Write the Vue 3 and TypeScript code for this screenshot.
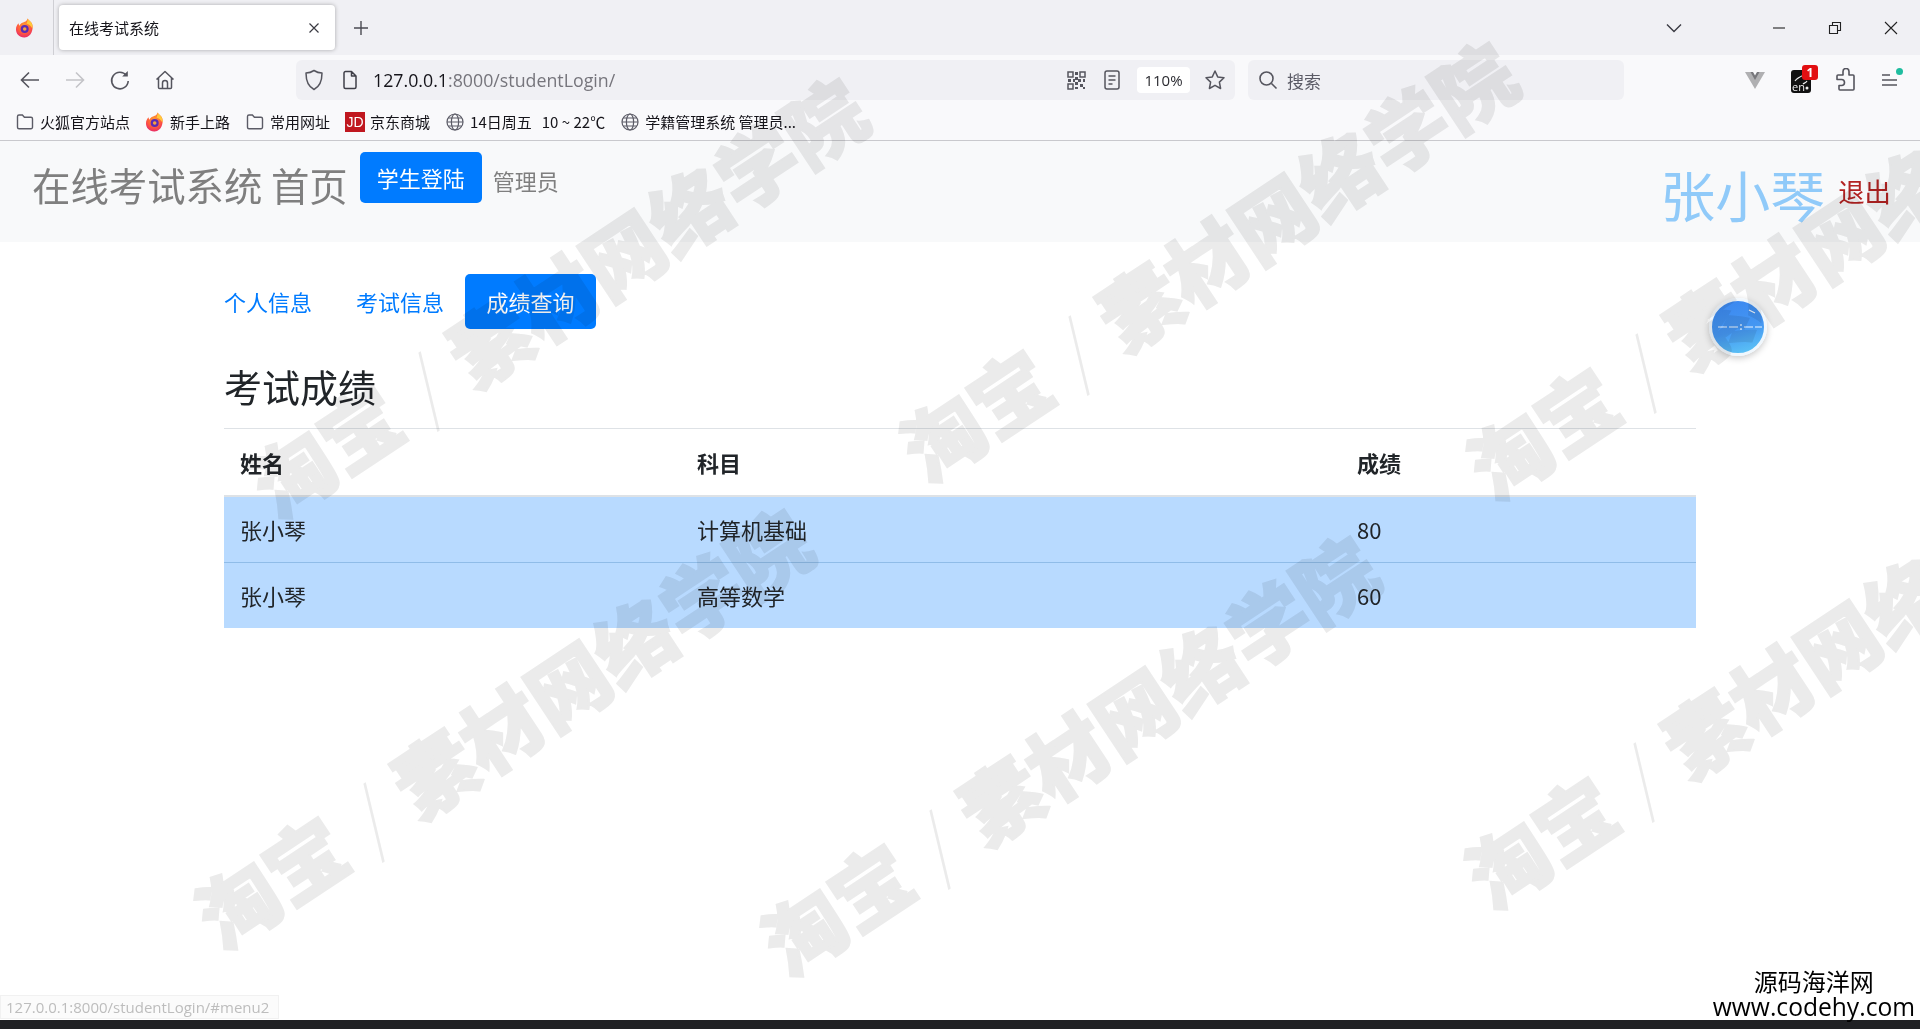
<script setup lang="ts">
const bookmarks = [
  { icon: 'folder', label: '火狐官方站点' },
  { icon: 'fox', label: '新手上路' },
  { icon: 'folder', label: '常用网址' },
  { icon: 'jd', label: '京东商城' },
  { icon: 'globe', label: '14日周五   10 ~ 22℃' },
  { icon: 'globe', label: '学籍管理系统 管理员...' },
]

const scores = [
  { name: '张小琴', subject: '计算机基础', score: 80 },
  { name: '张小琴', subject: '高等数学', score: 60 },
]

const marks = ['a', 'b', 'c', 'd', 'e', 'f']
</script>

<template>
  <div class="screen">
    <svg class="defs" width="0" height="0">
      <defs>
        <radialGradient id="foxFill" cx="50%" cy="35%" r="70%">
          <stop offset="0" stop-color="#ff9a2e" />
          <stop offset="0.6" stop-color="#ff5a3c" />
          <stop offset="1" stop-color="#e4226f" />
        </radialGradient>
        <symbol id="fox" viewBox="0 0 20 20">
          <path d="M12.5 0.5c1 1.6 3.6 3 4.6 5.600 1.600 4.400-.4 13-7.400 13.400C4.600 19.800 1 16.200 1 11.600 1 8.800 2 6.800 3.600 5.300c0 1.200.4 2 1 2.500C5.400 5 9 4.400 10.500 3.600c1-.6 1.800-1.700 2-3.100z" fill="url(#foxFill)" />
          <path d="M12.500.5c1 1.600 3.600 3 4.600 5.600.5 1.400.6 3.200.3 5-.9-2.400-2.900-4.700-6-5.600.9-1.500 1.300-3.200 1.100-5z" fill="#ffc93a" />
          <circle cx="9.700" cy="11" r="4" fill="#5b2bb5" />
          <circle cx="9.700" cy="11" r="1.800" fill="#f7a13d" />
        </symbol>
        <symbol id="folder" viewBox="0 0 20 20">
          <path d="M2.500 4.500a1.500 1.500 0 0 1 1.500-1.500h3.400l2 2.200H16a1.500 1.500 0 0 1 1.500 1.500v8.600a1.500 1.500 0 0 1-1.500 1.500H4a1.500 1.500 0 0 1-1.500-1.500z" fill="none" stroke="#5b5b66" stroke-width="1.400" />
        </symbol>
        <symbol id="globe" viewBox="0 0 20 20">
          <g fill="none" stroke="#5b5b66" stroke-width="1.200">
            <circle cx="10" cy="10" r="8" />
            <ellipse cx="10" cy="10" rx="3.600" ry="8" />
            <path d="M2 10h16M3.200 6h13.600M3.200 14h13.600" />
          </g>
        </symbol>
      </defs>
    </svg>

    <header class="tabstrip">
      <svg class="tab-fox" width="20" height="20"><use href="#fox" /></svg>
      <span class="tab-divider"></span>
      <div class="tab">
        <span class="tab-title">在线考试系统</span>
        <svg class="tab-close" width="12" height="12" viewBox="0 0 12 12"><path d="M1.500 1.500l9 9M10.500 1.500l-9 9" stroke="#3a3a42" stroke-width="1.200" /></svg>
      </div>
      <svg class="tab-new" width="16" height="16" viewBox="0 0 16 16"><path d="M8 1v14M1 8h14" stroke="#4a4a52" stroke-width="1.400" /></svg>
      <svg class="tab-list" width="16" height="10" viewBox="0 0 16 10"><path d="M1 1.500l7 7 7-7" fill="none" stroke="#3a3a42" stroke-width="1.400" /></svg>
      <div class="win-btns">
        <svg width="14" height="14" viewBox="0 0 14 14"><path d="M1 7h12" stroke="#222" stroke-width="1.100" /></svg>
        <svg width="14" height="14" viewBox="0 0 14 14"><path d="M1.500 4.500h8v8h-8zM4.500 4.500V1.500h8v8h-3" fill="none" stroke="#222" stroke-width="1.100" /></svg>
        <svg width="14" height="14" viewBox="0 0 14 14"><path d="M1 1l12 12M13 1L1 13" stroke="#222" stroke-width="1.100" /></svg>
      </div>
    </header>

    <div class="toolbar">
      <div class="nav-icons">
        <svg width="22" height="22" viewBox="0 0 22 22"><path d="M20 11H3M10 3.500L2.500 11l7.500 7.500" fill="none" stroke="#55555e" stroke-width="1.600" /></svg>
        <svg width="22" height="22" viewBox="0 0 22 22"><path d="M2 11h17M12 3.500l7.500 7.500-7.500 7.500" fill="none" stroke="#c4c4c8" stroke-width="1.600" /></svg>
        <svg width="22" height="22" viewBox="0 0 22 22"><path d="M17.500 6.500A8.300 8.300 0 1 0 19.200 12" fill="none" stroke="#55555e" stroke-width="1.600" /><path d="M18.800 2v5.600h-5.600" fill="#55555e" /></svg>
        <svg width="22" height="22" viewBox="0 0 22 22"><path d="M2.500 10.500L11 2.500l8.500 8M4.500 9v9.500a1 1 0 0 0 1 1h11a1 1 0 0 0 1-1V9M8.500 19.500V14a2.500 2.500 0 0 1 5 0v5.500" fill="none" stroke="#55555e" stroke-width="1.500" stroke-linejoin="round" /></svg>
      </div>
      <div class="urlbar">
        <svg class="url-shield" width="20" height="22" viewBox="0 0 20 22"><path d="M10 1.500c2.500 1.600 5 2.400 8 2.600 0 8-1.800 13.400-8 16.400C3.800 17.500 2 12.100 2 4.100c3-.2 5.500-1 8-2.600z" fill="none" stroke="#55555e" stroke-width="1.500" stroke-linejoin="round" /></svg>
        <svg class="url-page" width="18" height="20" viewBox="0 0 18 20"><path d="M3 3a1.500 1.500 0 0 1 1.500-1.500h6l4.500 4.500v11a1.500 1.500 0 0 1-1.500 1.500h-9A1.500 1.500 0 0 1 3 17zM10.500 1.500V6H15" fill="none" stroke="#3f3f48" stroke-width="1.500" stroke-linejoin="round" /></svg>
        <span class="url-text"><span class="url-host">127.0.0.1</span>:8000/studentLogin/</span>
        <svg class="url-qr" width="19" height="19" viewBox="0 0 19 19">
          <g fill="none" stroke="#55555e" stroke-width="1.500"><path d="M1 1h5v5H1zM13 1h5v5h-5zM1 13h5v5H1z" /></g>
          <path d="M8 1h3v3H8zM8 6h3v3H8zM1 8h3v3H1zM6 8h2v3H6zM11 8h3v3h-3zM16 8h2v3h-2zM8 11h3v3H8zM13 13h3v3h-3zM8 16h3v2H8zM16 16h2v2h-2z" fill="#55555e" />
        </svg>
        <svg class="url-reader" width="16" height="20" viewBox="0 0 16 20"><path d="M3 1h10a2 2 0 0 1 2 2v14a2 2 0 0 1-2 2H3a2 2 0 0 1-2-2V3a2 2 0 0 1 2-2zM4.500 6h7M4.500 10h7M4.500 14h4" fill="none" stroke="#55555e" stroke-width="1.500" /></svg>
        <span class="zoom-pill">110%</span>
        <svg class="url-star" width="22" height="22" viewBox="0 0 22 22"><path d="M11 2l2.700 5.900 6.300.8-4.600 4.400 1.200 6.400-5.600-3.200-5.600 3.200 1.200-6.400L2 8.700l6.300-.8z" fill="none" stroke="#55555e" stroke-width="1.500" stroke-linejoin="round" /></svg>
      </div>
      <div class="searchbar">
        <svg width="20" height="20" viewBox="0 0 20 20"><circle cx="8.500" cy="8.500" r="6.500" fill="none" stroke="#55555e" stroke-width="1.600" /><path d="M13.500 13.500l5 5" stroke="#55555e" stroke-width="1.600" /></svg>
        <span>搜索</span>
      </div>
      <div class="ext-icons">
        <svg width="22" height="22" viewBox="0 0 22 22"><path d="M1 3h7l3 5.500L14 3h7L11 20z" fill="#b0b0b2" /><path d="M6.500 3H9l2 3.600L13 3h2.500L11 11z" fill="#77777b" /></svg>
        <span class="ext-en">
          <svg width="24" height="25" viewBox="0 0 24 25">
            <rect x="2" y="2" width="20" height="23" rx="3" fill="#111" />
            <path d="M6 13c3-4 7-5 11-7M14 16c1-1 3-1 4-3" fill="none" stroke="#eee" stroke-width="1.200" />
            <circle cx="18" cy="20" r="1.500" fill="#eee" />
          </svg>
          <span class="ext-en-label">en</span>
          <span class="ext-badge">1</span>
        </span>
        <svg width="22" height="24" viewBox="0 0 22 24"><path d="M9 3.500a3 3 0 0 1 6 0V7h4a1 1 0 0 1 1 1v13a1 1 0 0 1-1 1H6a1 1 0 0 1-1-1v-3.500h2.500a3 3 0 0 0 0-6H3V8a1 1 0 0 1 1-1h5z" fill="none" stroke="#55555e" stroke-width="1.600" stroke-linejoin="round" /></svg>
        <span class="ext-menu">
          <svg width="20" height="18" viewBox="0 0 20 18"><path d="M3 4h8M3 9h15M3 14h15" stroke="#55555e" stroke-width="1.500" /></svg>
          <i class="menu-dot"></i>
        </span>
      </div>
    </div>

    <div class="bookmarks">
      <div v-for="b in bookmarks" :key="b.label" class="bookmark">
        <span v-if="b.icon === 'jd'" class="jd">JD</span>
        <svg v-else width="20" height="20"><use :href="'#' + b.icon" /></svg>
        <span>{{ b.label }}</span>
      </div>
    </div>

    <nav class="navbar">
      <a class="brand">在线考试系统 首页</a>
      <a class="nav-btn">学生登陆</a>
      <a class="nav-plain">管理员</a>
      <div class="nav-user">
        <span class="user-name">张小琴</span>
        <a class="logout">退出</a>
      </div>
    </nav>

    <main class="content">
      <ul class="pills">
        <li class="pill">个人信息</li>
        <li class="pill">考试信息</li>
        <li class="pill active">成绩查询</li>
      </ul>
      <h2 class="page-title">考试成绩</h2>
      <table class="score-table">
        <colgroup>
          <col class="col-name" />
          <col class="col-subject" />
          <col />
        </colgroup>
        <thead>
          <tr>
            <th>姓名</th>
            <th>科目</th>
            <th>成绩</th>
          </tr>
        </thead>
        <tbody>
          <tr v-for="s in scores" :key="s.subject">
            <td>{{ s.name }}</td>
            <td>{{ s.subject }}</td>
            <td>{{ s.score }}</td>
          </tr>
        </tbody>
      </table>
    </main>

    <div class="bottom-bar"></div>

    <!-- overlays -->
    <div class="float-ball">
      <svg width="50" height="50" viewBox="0 0 50 50">
        <path d="M5 25h9M16 25h9M31 25h9M42 25h7M28 22v2M28 26v2M36 8l6 3" stroke="#fff" stroke-width="1.200" fill="none" opacity="0.9" />
      </svg>
    </div>
    <div class="status">127.0.0.1:8000/studentLogin/#menu2</div>
    <div class="site-mark">
      <div class="site-cn">源码海洋网</div>
      <div class="site-en">www.codehy.com</div>
    </div>
    <div v-for="m in marks" :key="m" class="wm" :class="'wm-' + m">淘宝<span class="wm-slash">/</span>素材网络学院</div>
  </div>
</template>

<style>
html, body {
  margin: 0;
  background: #fff;
}
</style>

<style scoped>
.screen {
  position: relative;
  display: flex;
  flex-direction: column;
  height: 100vh;
  overflow: hidden;
  font-family: "Noto Sans CJK SC", "Open Sans", sans-serif;
  color: #212529;
  background: #fff;
}

.defs {
  position: absolute;
}

/* browser chrome */
.tabstrip {
  display: flex;
  align-items: center;
  flex: none;
  height: 55px;
  background: #f0f0f4;
}
.tab-fox {
  margin-left: 15px;
}
.tab-divider {
  width: 1px;
  height: 55px;
  margin-left: 18px;
  background: #cfcfd4;
}
.tab {
  display: flex;
  align-items: center;
  justify-content: space-between;
  box-sizing: border-box;
  width: 276px;
  height: 45px;
  margin-left: 5px;
  padding: 0 15px 0 10px;
  border-radius: 4px;
  background: #fff;
  box-shadow: 0 0 4px rgba(0, 0, 0, 0.3);
  font-size: 15px;
  color: #15141a;
}
.tab-new {
  margin-left: 18px;
}
.tab-list {
  margin-left: auto;
}
.win-btns {
  display: flex;
  gap: 42px;
  margin-left: 90px;
  padding-right: 22px;
}

.toolbar {
  display: flex;
  align-items: center;
  flex: none;
  box-sizing: border-box;
  height: 48px;
  padding-top: 2px;
  background: #f9f9fb;
}
.nav-icons {
  display: flex;
  gap: 23px;
  width: 296px;
  padding-left: 19px;
  box-sizing: border-box;
}
.urlbar,
.searchbar {
  display: flex;
  align-items: center;
  height: 40px;
  border-radius: 6px;
  background: #f0f0f4;
}
.urlbar {
  width: 939px;
}
.url-shield {
  margin-left: 8px;
}
.url-page {
  margin-left: 17px;
}
.url-text {
  margin-left: 14px;
  font-family: "Open Sans", sans-serif;
  font-size: 17.8px;
  color: #76757c;
}
.url-host {
  color: #15141a;
}
.url-qr {
  margin-left: auto;
}
.url-reader {
  margin-left: 18px;
}
.zoom-pill {
  width: 53px;
  height: 26px;
  margin-left: 17px;
  border-radius: 4px;
  background: #fff;
  font-family: "Open Sans", sans-serif;
  font-size: 15px;
  line-height: 26px;
  text-align: center;
  color: #2a2a30;
}
.url-star {
  margin: 0 9px 0 14px;
}
.searchbar {
  gap: 9px;
  width: 376px;
  margin-left: 13px;
  padding-left: 10px;
  box-sizing: border-box;
  font-size: 17px;
  color: #5b5b66;
}
.ext-icons {
  display: flex;
  align-items: center;
  gap: 23px;
  margin-left: auto;
  padding-right: 21px;
}
.ext-en {
  position: relative;
  display: flex;
  margin-right: -2px;
}
.ext-en-label {
  position: absolute;
  left: 3px;
  bottom: -1px;
  font-family: "Open Sans", sans-serif;
  font-size: 11px;
  color: #eee;
}
.ext-badge {
  position: absolute;
  top: -3px;
  right: -5px;
  width: 16px;
  height: 15px;
  border-radius: 3px;
  background: #e20f12;
  font-family: "Open Sans", sans-serif;
  font-size: 12px;
  font-weight: 700;
  line-height: 15px;
  text-align: center;
  color: #fff;
}
.ext-menu {
  position: relative;
  display: flex;
}
.menu-dot {
  position: absolute;
  top: -3px;
  right: -4px;
  width: 7px;
  height: 7px;
  border-radius: 50%;
  background: #1fbd9f;
}

.bookmarks {
  display: flex;
  align-items: center;
  flex: none;
  gap: 15px;
  box-sizing: border-box;
  height: 38px;
  padding-left: 15px;
  border-bottom: 1px solid #c9c9cd;
  background: #f9f9fb;
  font-size: 15px;
  color: #15141a;
}
.bookmark {
  display: flex;
  align-items: center;
  gap: 5px;
  white-space: pre;
}
.jd {
  width: 20px;
  height: 20px;
  background: #c0171f;
  font-family: "Liberation Sans", sans-serif;
  font-size: 14px;
  line-height: 20px;
  text-align: center;
  color: #fff;
}

/* page */
.navbar {
  display: flex;
  align-items: flex-start;
  flex: none;
  box-sizing: border-box;
  height: 101px;
  padding: 11px 29px 0 32px;
  background: #f8f9fa;
}
.brand {
  margin-top: 3px;
  font-size: 38.4px;
  line-height: 58px;
  color: #7f7f7f;
}
.nav-btn {
  height: 51px;
  margin-left: 12px;
  padding: 0 17px;
  border-radius: 5px;
  background: #007bff;
  font-size: 22px;
  line-height: 51px;
  color: #fff;
}
.nav-plain {
  margin-left: 11px;
  font-size: 22px;
  line-height: 56px;
  color: #7f7f7f;
}
.nav-user {
  display: flex;
  align-items: flex-start;
  gap: 13px;
  margin-left: auto;
  margin-top: 1px;
}
.user-name {
  font-size: 55px;
  line-height: 80px;
  color: #90caf9;
}
.logout {
  font-size: 26.4px;
  line-height: 80px;
  margin-top: -2px;
  color: #b22222;
}

.content {
  flex: 1;
  box-sizing: border-box;
  width: 1472px;
  margin: 0 auto;
  padding-top: 32px;
}
.pills {
  display: flex;
  margin: 0;
  padding: 0;
  list-style: none;
}
.pill {
  padding: 0 22px;
  border-radius: 5px;
  font-size: 22px;
  line-height: 55px;
  color: #007bff;
}
.pill:first-child {
  padding-left: 0;
}
.pill.active {
  margin-left: -1px;
  padding: 0 21.5px;
  background: #007bff;
  color: #fff;
}
.page-title {
  margin: 28px 0 14px;
  font-size: 38px;
  font-weight: 400;
  line-height: 57px;
}
.score-table {
  width: 100%;
  border-collapse: collapse;
  table-layout: fixed;
  font-size: 22px;
}
.col-name {
  width: 457px;
}
.col-subject {
  width: 660px;
}
th,
td {
  padding: 16px;
  line-height: 33px;
  text-align: left;
}
th {
  padding-top: 17px;
  border-top: 1px solid #dee2e6;
  border-bottom: 2px solid #dee2e6;
  font-weight: 700;
}
td {
  background: #b8daff;
}
tbody tr + tr td {
  border-top: 1px solid #8fbce8;
}

.bottom-bar {
  flex: none;
  height: 9px;
  background: #202124;
}

/* things lying over the page */
.float-ball {
  position: absolute;
  left: 1709px;
  top: 298px;
  display: flex;
  align-items: center;
  justify-content: center;
  box-sizing: border-box;
  width: 58px;
  height: 58px;
  border: 3px solid #f0f7fd;
  border-radius: 50%;
  background: linear-gradient(165deg, #3a86f0 0%, #4597f2 55%, #5fcaf6 100%);
  box-shadow: 0 2px 7px rgba(0, 0, 0, 0.22);
}
.status {
  position: absolute;
  left: 0;
  bottom: 10px;
  box-sizing: border-box;
  height: 24px;
  padding: 0 9px 0 5px;
  border: 1px solid #f1f1f1;
  background: #fbfbfb;
  font-family: "Open Sans", sans-serif;
  font-size: 15px;
  line-height: 22px;
  color: #bdbdbd;
}
.site-mark {
  position: absolute;
  right: 5px;
  bottom: 8px;
  text-align: center;
  color: #000;
}
.site-cn {
  font-size: 24px;
  line-height: 24px;
}
.site-en {
  font-family: "Open Sans", sans-serif;
  font-size: 24.6px;
  line-height: 28px;
}
.wm {
  position: absolute;
  font-size: 80px;
  font-weight: 900;
  line-height: 80px;
  white-space: nowrap;
  color: #ebebeb;
  -webkit-text-stroke: 2px #ebebeb;
  mix-blend-mode: multiply;
  pointer-events: none;
  transform-origin: 0 50%;
  transform: translateY(-50%) rotate(-33.5deg);
}
.wm-slash {
  padding: 0 22px;
  font-weight: 100;
  -webkit-text-stroke: 0;
}
.wm-a { left: 258px; top: 492px; }
.wm-b { left: 908px; top: 456px; }
.wm-c { left: 1475px; top: 474px; }
.wm-d { left: 203px; top: 923px; }
.wm-e { left: 769px; top: 950px; }
.wm-f { left: 1473px; top: 883px; }
</style>
